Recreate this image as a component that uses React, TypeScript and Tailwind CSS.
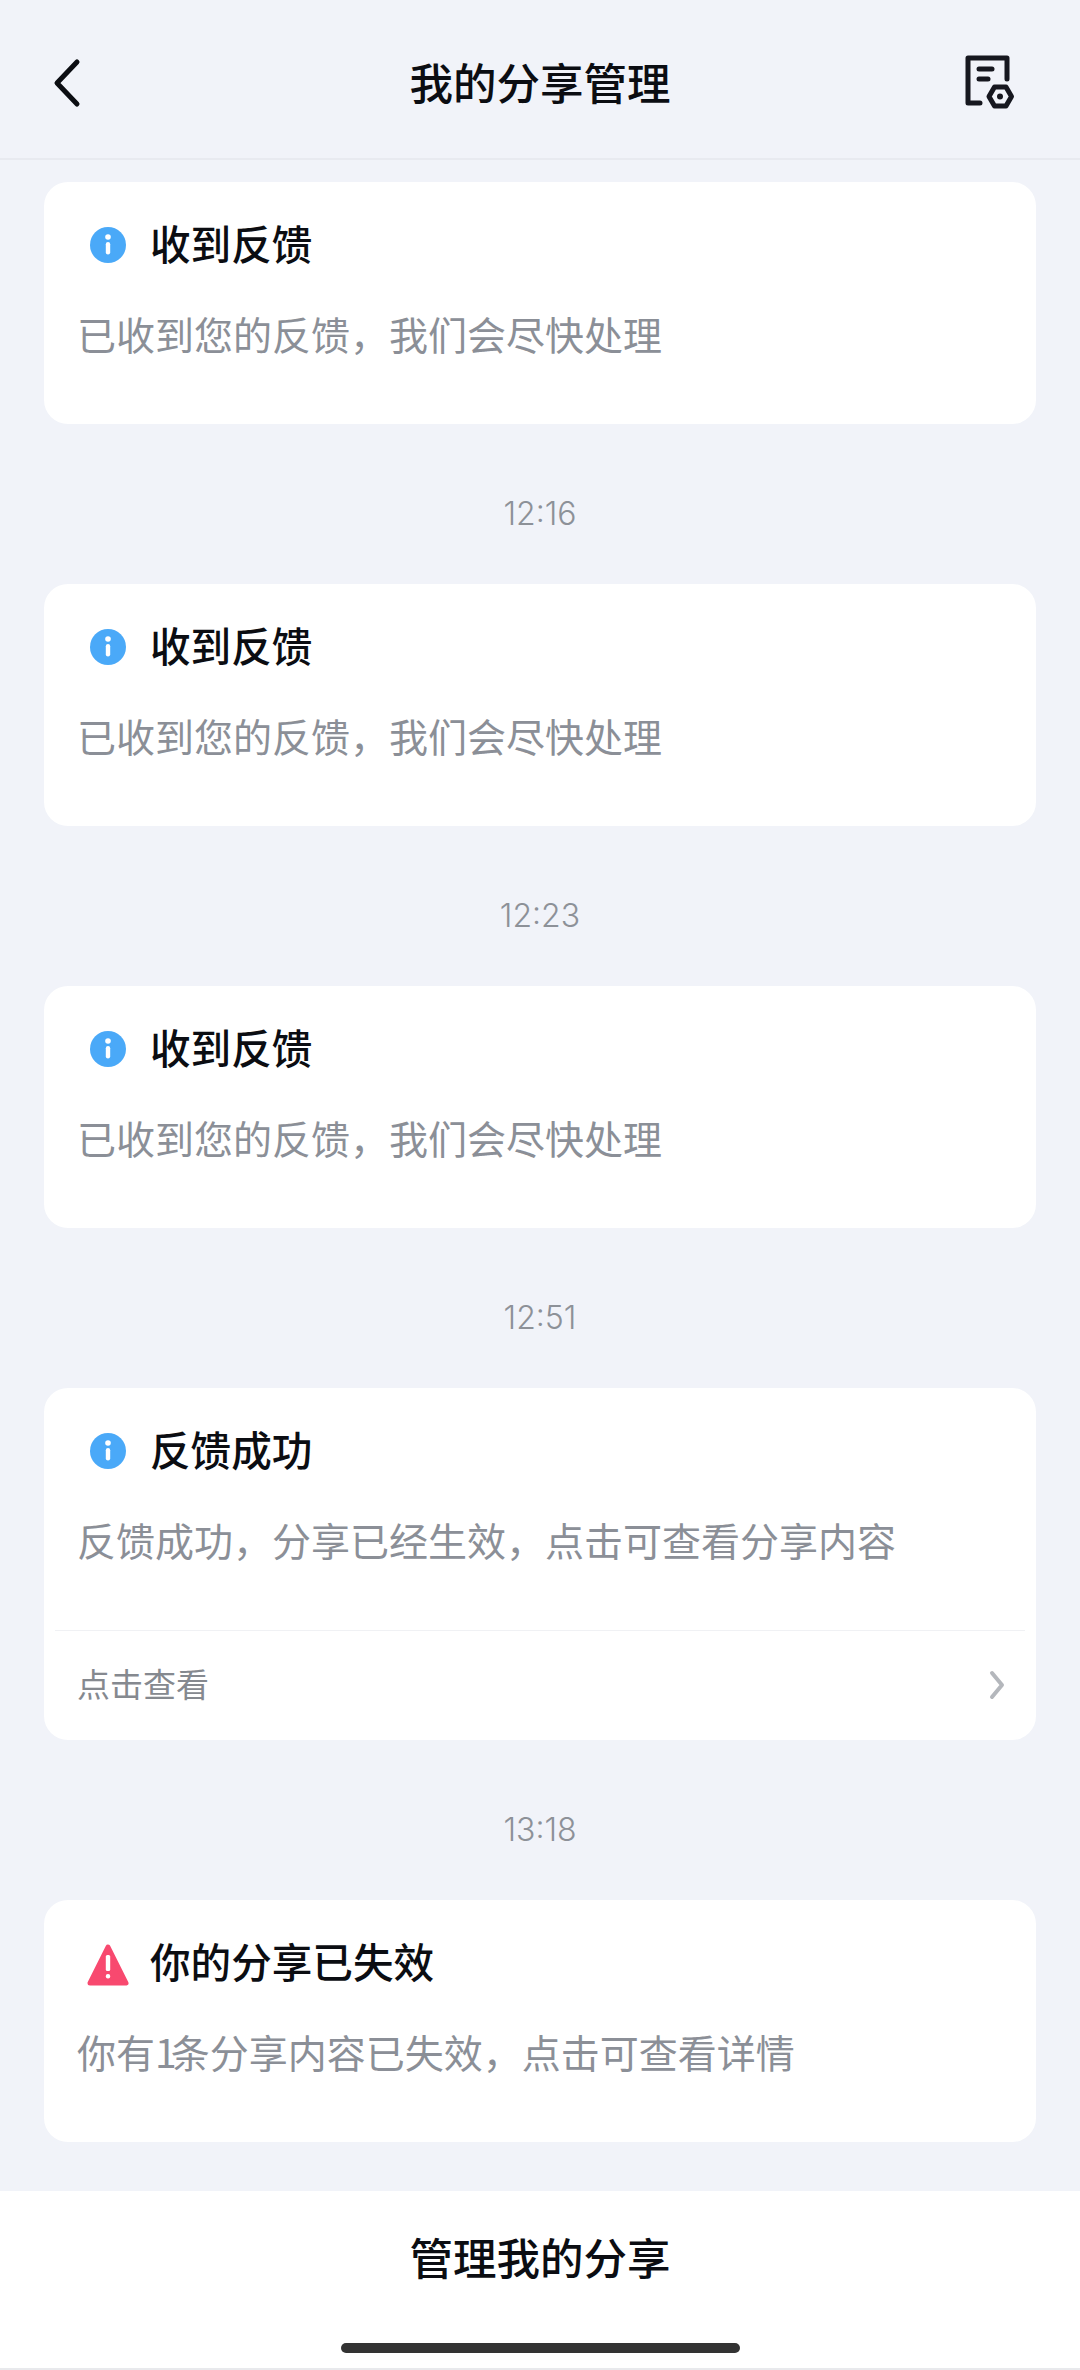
const font = { fontFamily: '"Noto Sans CJK SC", sans-serif' };

function InfoIcon() {
  return (
    <svg width="38" height="38" viewBox="0 0 38 38" className="shrink-0 mt-[3px]">
      <circle cx="19" cy="19" r="18" fill="#4aa9f8" />
      <circle cx="19" cy="11" r="2.8" fill="#fff" />
      <rect x="16.8" y="16" width="4.4" height="12.5" rx="2.2" fill="#fff" />
    </svg>
  );
}

function WarnIcon() {
  return (
    <svg width="46" height="44" viewBox="0 0 46 44" className="shrink-0 mt-[6px]">
      <path d="M23 4 L41 40 H5 Z" fill="#f8496f" stroke="#f8496f" strokeWidth="5" strokeLinejoin="round" />
      <rect x="20.8" y="12" width="4.4" height="16" rx="1.5" fill="#fff" />
      <rect x="20.8" y="31" width="4.4" height="4.4" rx="2" fill="#fff" />
    </svg>
  );
}

function Time({ t }: { t: string }) {
  return (
    <div className="h-[160px] flex items-center justify-center pt-[20px] text-[32px] text-[#8d9198] font-['Inter'] font-light">
      {t}
    </div>
  );
}

function Card({
  icon,
  title,
  body,
  link,
}: {
  icon: React.ReactNode;
  title: string;
  body: React.ReactNode;
  link?: boolean;
}) {
  return (
    <div className="bg-white rounded-[24px] flex flex-col">
      <div className="h-[242px] flex flex-col">
        <div className="h-[123px] flex items-center">
          <div className="w-[106px] flex justify-center pl-[24px] pr-[2px]">{icon}</div>
          <div className="text-[40.6px] font-medium leading-none text-[#0b0d12]">{title}</div>
        </div>
        <div className="pl-[33px] h-[56px] flex items-center text-[39px] leading-none text-[#8b8f97]">
          <span>{body}</span>
        </div>
      </div>
      {link && (
        <div className="mx-[11px] border-t border-[#f0f1f4] h-[110px] flex items-center justify-between pl-[22px] pr-[18px] pb-[2px]">
          <span className="text-[33px] leading-none text-[#85898f] -mt-[3px]">点击查看</span>
          <svg width="20" height="30" viewBox="0 0 20 30">
            <path d="M5 3 L15 15 L5 27" fill="none" stroke="#b4b7bc" strokeWidth="4" strokeLinecap="round" strokeLinejoin="round" />
          </svg>
        </div>
      )}
    </div>
  );
}

export default function App() {
  const feedbackBody = "已收到您的反馈，我们会尽快处理";
  return (
    <div style={font} className="w-[1080px] h-[2370px] bg-[#f1f3f9] flex flex-col overflow-hidden">
      <header className="h-[160px] shrink-0 border-b-2 border-[#e8eaf0] flex items-center px-[60px]">
        <div className="flex-1 flex justify-start">
          <svg width="36" height="50" viewBox="0 0 36 50" className="mt-[8px] -ml-[12px]">
            <path d="M29 4 L9 25 L29 46" fill="none" stroke="#0b0d12" strokeWidth="5" strokeLinecap="round" strokeLinejoin="round" />
          </svg>
        </div>
        <div className="text-[43.5px] font-medium leading-none text-[#0b0d12] mt-[6px]">我的分享管理</div>
        <div className="flex-1 flex justify-end">
          <svg width="60" height="60" viewBox="0 0 60 60" className="mt-[6px] -mr-[2px]" fill="none" stroke="#16171f" strokeWidth="5" strokeLinecap="round" strokeLinejoin="round">
            <path d="M45 27 V6 H6 V51 H18" />
            <path d="M17 17 H30" />
            <path d="M17 27 H26" />
            <path d="M27 44.5 L32.5 35 H44 L49.5 44.5 L44 54 H32.5 Z" />
            <circle cx="38" cy="44.5" r="3" fill="#16171f" stroke="none" />
          </svg>
        </div>
      </header>
      <main className="flex-1 px-[44px] pt-[22px]">
        <Card icon={<InfoIcon />} title="收到反馈" body={feedbackBody} />
        <Time t="12:16" />
        <Card icon={<InfoIcon />} title="收到反馈" body={feedbackBody} />
        <Time t="12:23" />
        <Card icon={<InfoIcon />} title="收到反馈" body={feedbackBody} />
        <Time t="12:51" />
        <Card icon={<InfoIcon />} title="反馈成功" body="反馈成功，分享已经生效，点击可查看分享内容" link />
        <Time t="13:18" />
        <Card
          icon={<WarnIcon />}
          title="你的分享已失效"
          body={
            <>
              你有<span className="tracking-[-6px]">1</span>条分享内容已失效，点击可查看详情
            </>
          }
        />
      </main>
      <footer className="h-[179px] shrink-0 bg-white border-b-2 border-[#e8e9ec] flex flex-col items-center">
        <div className="h-[132px] mb-[20px] flex items-center justify-center text-[43.5px] font-medium leading-none text-[#0b0d12]">管理我的分享</div>
        <div className="w-[399px] h-[10px] rounded-full bg-[#333333]" />
      </footer>
    </div>
  );
}
